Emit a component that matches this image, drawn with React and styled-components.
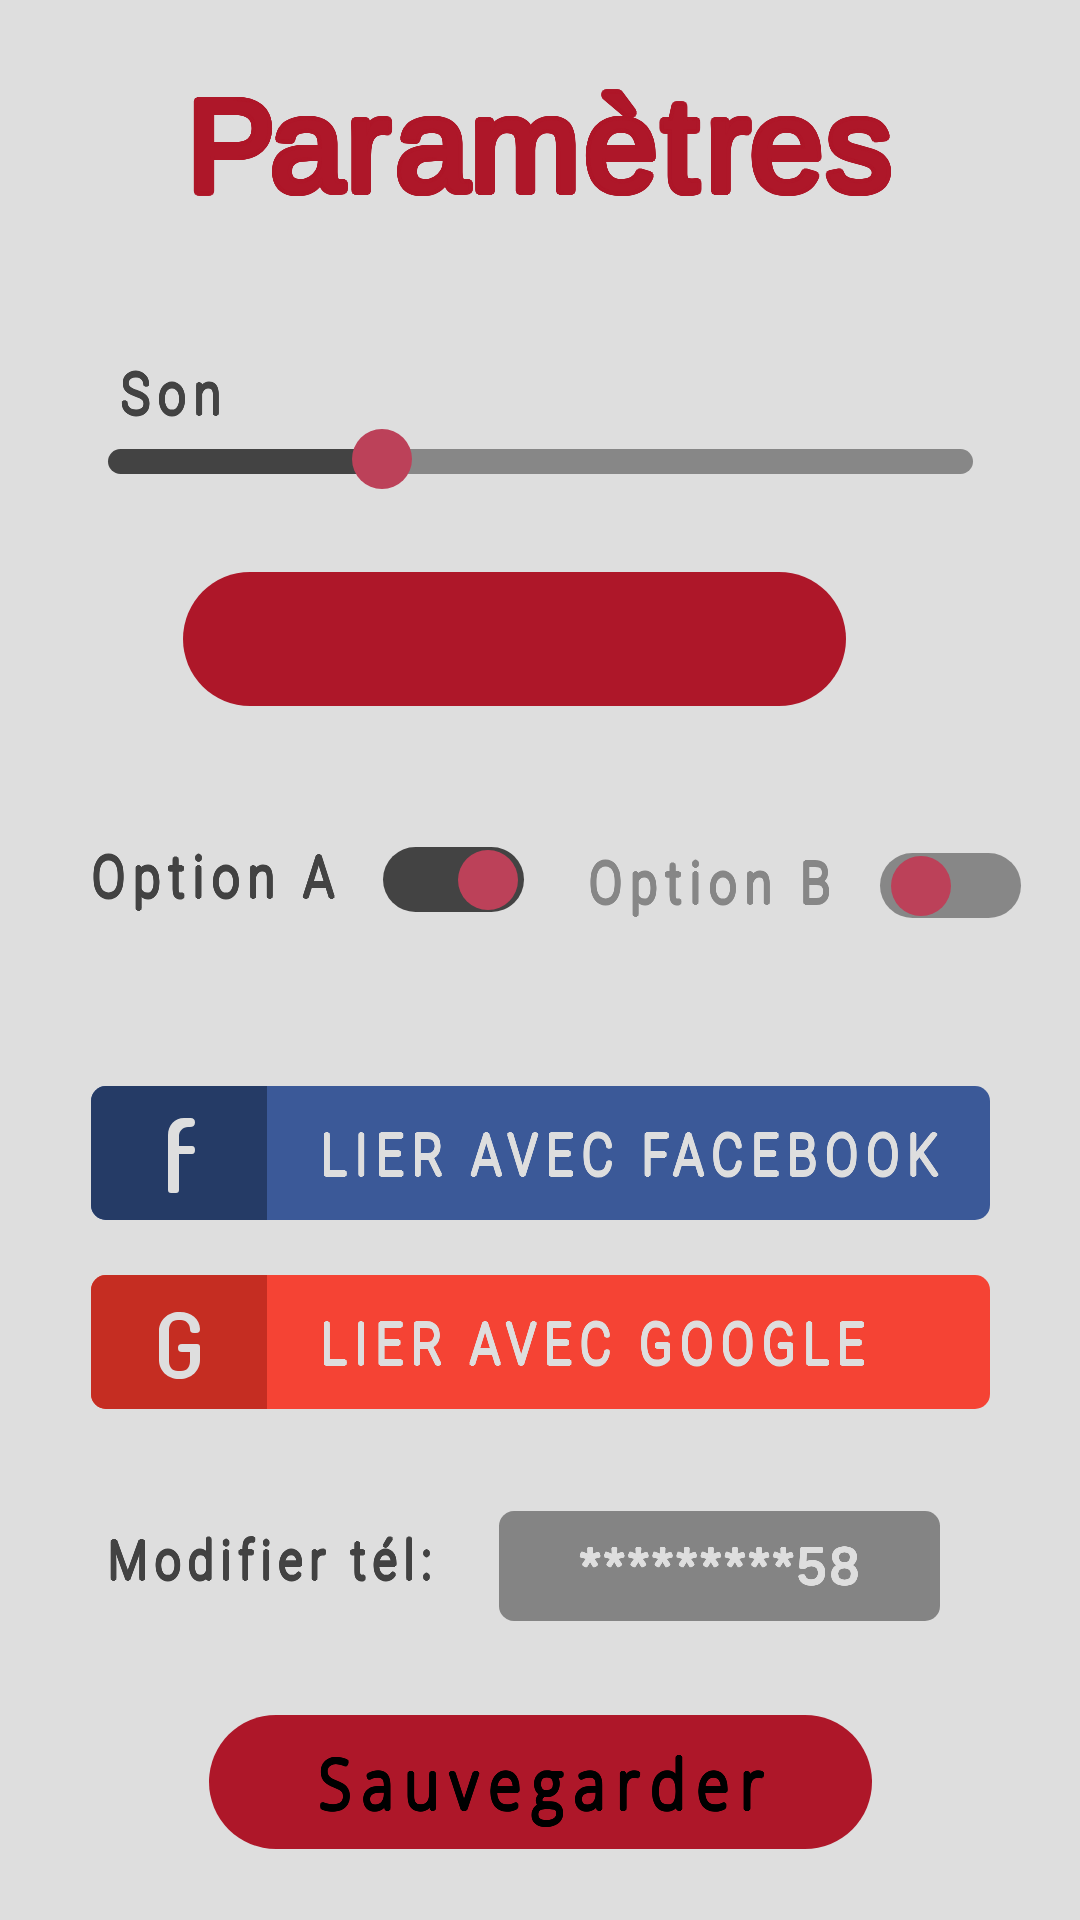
import React, { useState } from "react";
import styled, { createGlobalStyle } from "styled-components";

const color = {
  page: "#dedede",
  red: "#ae1729",
  knob: "#bc4159",
  dark: "#434343",
  grey: "#878787",
};

// A ring of hard shadows thickens the strokes and rounds their ends.
const rounded = (radius, steps = 24) =>
  Array.from({ length: steps }, (_, i) => {
    const a = (i / steps) * Math.PI * 2;
    return `${(Math.cos(a) * radius).toFixed(2)}px ${(Math.sin(a) * radius).toFixed(2)}px 0 currentColor`;
  }).join(", ");

const GlobalStyle = createGlobalStyle`
  * { box-sizing: border-box; }
  body { margin: 0; background: ${color.page}; }
  button { border: 0; padding: 0; text-align: left; cursor: pointer; }
`;

const Page = styled.main`
  width: 1080px;
  height: 1920px;
  padding-top: 76px;
  display: flex;
  flex-direction: column;
  align-items: flex-start;
  background: ${color.page};
  overflow: hidden;
`;

const Title = styled.h1`
  margin: 0 0 147px 187px;
  font: normal 132px/140px "Liberation Sans", Arial, sans-serif;
  letter-spacing: 2.6px;
  color: ${color.red};
  text-shadow: ${rounded(3.9, 36)};
  white-space: nowrap;
`;

const Kern = styled.span`
  letter-spacing: ${(p) => p.$by}px;
`;

const Label = styled.span`
  display: block;
  font-family: ${(p) => p.$font || "Roboto"}, sans-serif;
  font-weight: 300;
  font-size: ${(p) => p.$size || 57.5}px;
  line-height: 60px;
  letter-spacing: ${(p) => p.$track ?? 9.8}px;
  color: ${(p) => p.$tone || color.dark};
  text-shadow: ${(p) => rounded(p.$swell || 1.6, 16)};
  white-space: nowrap;
  transform: scaleX(${(p) => p.$narrow || 0.85});
  transform-origin: left center;
`;

const Volume = styled.section`
  width: 865px;
  margin-left: 108px;
`;

const VolumeLabel = styled.div`
  padding: 2px 0 0 13px;
  height: 66px;
`;

const Slider = styled.div`
  height: 60px;
  display: flex;
  align-items: center;
`;

const Track = styled.div`
  height: 25px;
  margin-top: 5px;
  flex: ${(p) => p.$grow};
  background: ${(p) => p.$tone};
  border-radius: ${(p) => (p.$end ? "0 13px 13px 0" : "13px 0 0 13px")};
`;

const Knob = styled.span`
  display: block;
  flex: none;
  width: 60px;
  height: 60px;
  border-radius: 50%;
  background: ${color.knob};
`;

const SliderKnob = styled(Knob)`
  margin: 0 -30px;
  z-index: 1;
`;

const Pill = styled.button`
  width: 663px;
  height: 134px;
  margin: ${(p) => p.$margin};
  padding-left: ${(p) => p.$inset || 0}px;
  border-radius: 67px;
  background: ${color.red};
`;

const Options = styled.section`
  display: flex;
  margin: 141px 0 0 92px;
`;

const Option = styled.div`
  display: flex;
  align-items: center;
  width: 497px;
  height: 65px;
  margin-top: ${(p) => p.$drop || 0}px;
`;

const OptionName = styled.div`
  width: 291px;
  height: 64px;
`;

const Switch = styled.button`
  display: flex;
  align-items: center;
  justify-content: ${(p) => (p.$on ? "flex-end" : "flex-start")};
  width: 141px;
  height: 65px;
  padding: 0 6px 0 11px;
  border-radius: 33px;
  background: ${(p) => (p.$on ? color.dark : color.grey)};
`;

const Links = styled.section`
  display: flex;
  flex-direction: column;
  gap: 55px;
  margin: 168px 0 0 91px;
`;

const LinkButton = styled.button`
  display: flex;
  width: 899px;
  height: 134px;
  border-radius: 15px;
  overflow: hidden;
  background: ${(p) => p.$tone};
`;

const Emblem = styled.span`
  display: flex;
  width: 176px;
  flex: none;
  background: ${(p) => p.$tone};
`;

const EmblemIcon = styled.svg`
  width: 176px;
  height: 134px;
  fill: ${color.page};
`;

const LinkText = styled.span`
  padding: 40px 0 0 54px;
`;

const Phone = styled.section`
  display: flex;
  margin: 102px 0 0 108px;
`;

const PhoneLabel = styled.div`
  width: 391px;
  padding-top: 20px;
`;

const PhoneField = styled.div`
  width: 441px;
  height: 110px;
  padding-left: 81px;
  border-radius: 15px;
  background: #848484;
  color: ${color.page};
  font: normal 52px/111px "Liberation Sans", Arial, sans-serif;
  letter-spacing: 3.9px;
  text-shadow: ${rounded(1, 16)};
`;

function Toggle({ name, initial, drop }) {
  const [on, setOn] = useState(initial);
  return (
    <Option $drop={drop}>
      <OptionName>
        <Label $tone={on ? color.dark : color.grey}>{name}</Label>
      </OptionName>
      <Switch $on={on} aria-label={name} onClick={() => setOn(!on)}>
        <Knob />
      </Switch>
    </Option>
  );
}

export default function App() {
  return (
    <>
      <GlobalStyle />
      <Page>
        <Title>
          <Kern $by={-4.7}>P</Kern>a<Kern $by={5}>r</Kern>
          <Kern $by={1.5}>a</Kern>
          <Kern $by={4}>m</Kern>
          <Kern $by={4}>è</Kern>
          <Kern $by={7.5}>t</Kern>
          <Kern $by={0}>r</Kern>es
        </Title>

        <Volume>
          <VolumeLabel>
            <Label>Son</Label>
          </VolumeLabel>
          <Slider>
            <Track $grow={274} $tone={color.dark} />
            <SliderKnob />
            <Track $grow={591} $tone={color.grey} $end />
          </Slider>
        </Volume>

        <Pill $margin="83px 0 0 183px" aria-label="Action" />

        <Options>
          <Toggle name="Option A" initial={true} />
          <Toggle name="Option B" initial={false} drop={6} />
        </Options>

        <Links>
          <LinkButton $tone="#3b5998">
            <Emblem $tone="#253b66">
              <EmblemIcon viewBox="0 0 176 134">
                <path d="M77 49C77 39 84 32 93 32H99.500C102.500 32 104 33.500 104 36.500C104 39.500 102 41 99 41H97C92 41 88 45 88 50V60H101C103 60 104 61.500 104 64C104 66.500 103 68 101 68H88V104C88 106 87 107 85 107H80C78 107 77 106 77 104Z" />
              </EmblemIcon>
            </Emblem>
            <LinkText>
              <Label $tone={color.page} $track={10} $narrow={0.84}>
                LIER AVEC FACEBOOK
              </Label>
            </LinkText>
          </LinkButton>
          <LinkButton $tone="#f54334">
            <Emblem $tone="#c52d22">
              <EmblemIcon viewBox="0 0 176 134">
                <path d="M68 56C68 45 77 37 88 37H89C100 37 109 44 109 54C109 56.500 108 58 105 58H103C100 58 99 56.500 99 54C99 49 95 45 90 45H87C81 45 78 49 78 55V86C78 92 81 96 87 96H90C96 96 99 92 99 86V77H91C88 77 87 75.500 87 73C87 70.500 88 69 91 69H106C108 69 109 70 109 72V85C109 96 100 104 89 104H88C77 104 68 96 68 85Z" />
              </EmblemIcon>
            </Emblem>
            <LinkText>
              <Label $tone={color.page} $track={9.7} $narrow={0.84}>
                LIER AVEC GOOGLE
              </Label>
            </LinkText>
          </LinkButton>
        </Links>

        <Phone>
          <PhoneLabel>
            <Label $size={54} $track={8.6}>
              Modifier tél:
            </Label>
          </PhoneLabel>
          <PhoneField>*********58</PhoneField>
        </Phone>

        <Pill $margin="94px 0 0 209px" $inset={110}>
          <Label
            $font='"Open Sans"'
            $size={69}
            $tone="#000"
            $track={13.3}
            $swell={2.1}
          >
            Sauvegarder
          </Label>
        </Pill>
      </Page>
    </>
  );
}
